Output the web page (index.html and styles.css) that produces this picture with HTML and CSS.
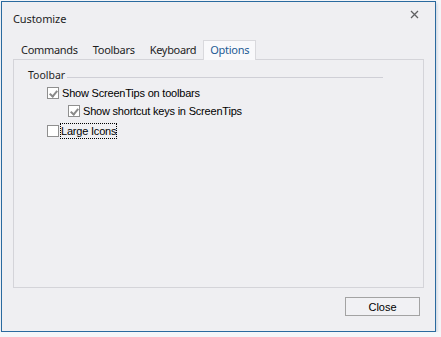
FILE: index.html
```html
<!DOCTYPE html>
<html lang="en">
<head>
    <meta charset="UTF-8">
    <title>Customize</title>
<link rel="stylesheet" href="styles.css">
</head>
<body>
    <div class="dialogo">
        <div class="titulo">
            <span>Customize</span>
            <svg class="fechar" width="9" height="9" viewBox="0 0 9 9"><path d="M1 1L8 8M8 1L1 8" stroke="#5f6062" stroke-width="1.3"/></svg>
        </div>

        <ul class="abas">
            <li class="aba">Commands</li>
            <li class="aba">Toolbars</li>
            <li class="aba">Keyboard</li>
            <li class="aba ativa">Options</li>
        </ul>

        <div class="painel">
            <div class="grupo">
                <span class="grupo-nome">Toolbar</span>
                <span class="grupo-linha"></span>
            </div>

            <label class="opcao primeira">
                <span class="caixa marcada"></span>
                <span>Show ScreenTips on toolbars</span>
            </label>
            <label class="opcao sub">
                <span class="caixa marcada"></span>
                <span>Show shortcut keys in ScreenTips</span>
            </label>
            <label class="opcao ultima">
                <span class="caixa"></span>
                <span class="foco">Large Icons</span>
            </label>
        </div>

        <div class="rodape">
            <button class="botao">Close</button>
        </div>
    </div>
</body>
</html>
```

FILE: styles.css
```css
* {
    box-sizing: border-box;
}

body {
    margin: 0;
    padding: 1px 0 0 1px;
    background-color: #f4f6f9;
    font-family: "Noto Sans", sans-serif;
    color: #1e1e1e;
}

.dialogo {
    width: 435px;
    height: 331px;
    border: 1px solid #2a6a9f;
    background-color: #efeff2;
    display: flex;
    flex-direction: column;
    box-shadow: 1px 2px 3px rgba(120, 140, 170, .35);
}

.titulo {
    height: 37px;
    display: flex;
    justify-content: space-between;
    padding: 9px 16px 0 11px;
    font-size: 11px;
    letter-spacing: -.1px;
}

.fechar {
    margin-top: -1px;
}

.abas {
    list-style: none;
    margin: 1px 0 0 11px;
    padding: 0;
    display: flex;
    height: 19px;
    font-size: 11px;
    letter-spacing: -.3px;
}

.aba {
    padding: 1px 6px 0 7px;
    border: 1px solid transparent;
    border-bottom: none;
}

.aba.ativa {
    background-color: #f9f9fb;
    border-color: #d9d9dd;
    color: #1d5b94;
    position: relative;
    z-index: 1;
    margin-bottom: -1px;
    height: 20px;
    padding-left: 6px;
}

.painel {
    height: 229px;
    margin: 0 11px 0 11px;
    border: 1px solid #d4d4d9;
    background-color: #efeff2;
    padding: 7px 0 0 14px;
}

.grupo {
    display: flex;
    align-items: center;
    font-size: 10.5px;
    width: 355px;
    height: 16px;
}

.grupo-linha {
    flex-grow: 1;
    height: 1px;
    background-color: #cfcfd6;
    margin: 4px 0 0 2px;
}

.opcao {
    display: flex;
    align-items: center;
    gap: 3px;
    margin-left: 19px;
    height: 17px;
    font-family: "Liberation Sans", Arial, sans-serif;
    font-size: 11px;
    letter-spacing: -.2px;
    color: #000;
}

.opcao.primeira {
    margin-top: 1px;
}

.opcao.sub {
    margin-left: 40px;
    margin-top: 1px;
}

.opcao.ultima {
    margin-top: 3px;
}

.caixa {
    width: 12px;
    height: 12px;
    border: 1px solid #8f8f8f;
    background-color: #fff;
    flex-shrink: 0;
    position: relative;
}

.caixa.marcada::after {
    content: "";
    position: absolute;
    left: 3px;
    top: 1px;
    width: 3px;
    height: 6px;
    border: solid #8a8a8a;
    border-width: 0 2px 2px 0;
    transform: rotate(40deg);
}

.foco {
    outline: 1px dotted #000;
    padding: 1px 0 1px 0;
    margin-left: -1px;
}

.rodape {
    display: flex;
    justify-content: flex-end;
    padding: 9px 15px 0 0;
}

.botao {
    width: 75px;
    height: 19px;
    border: 1px solid #a3a3a3;
    background-color: #f1f1f4;
    font-family: "Liberation Sans", Arial, sans-serif;
    font-size: 11px;
    color: #000;
    padding: 0;
}
```
